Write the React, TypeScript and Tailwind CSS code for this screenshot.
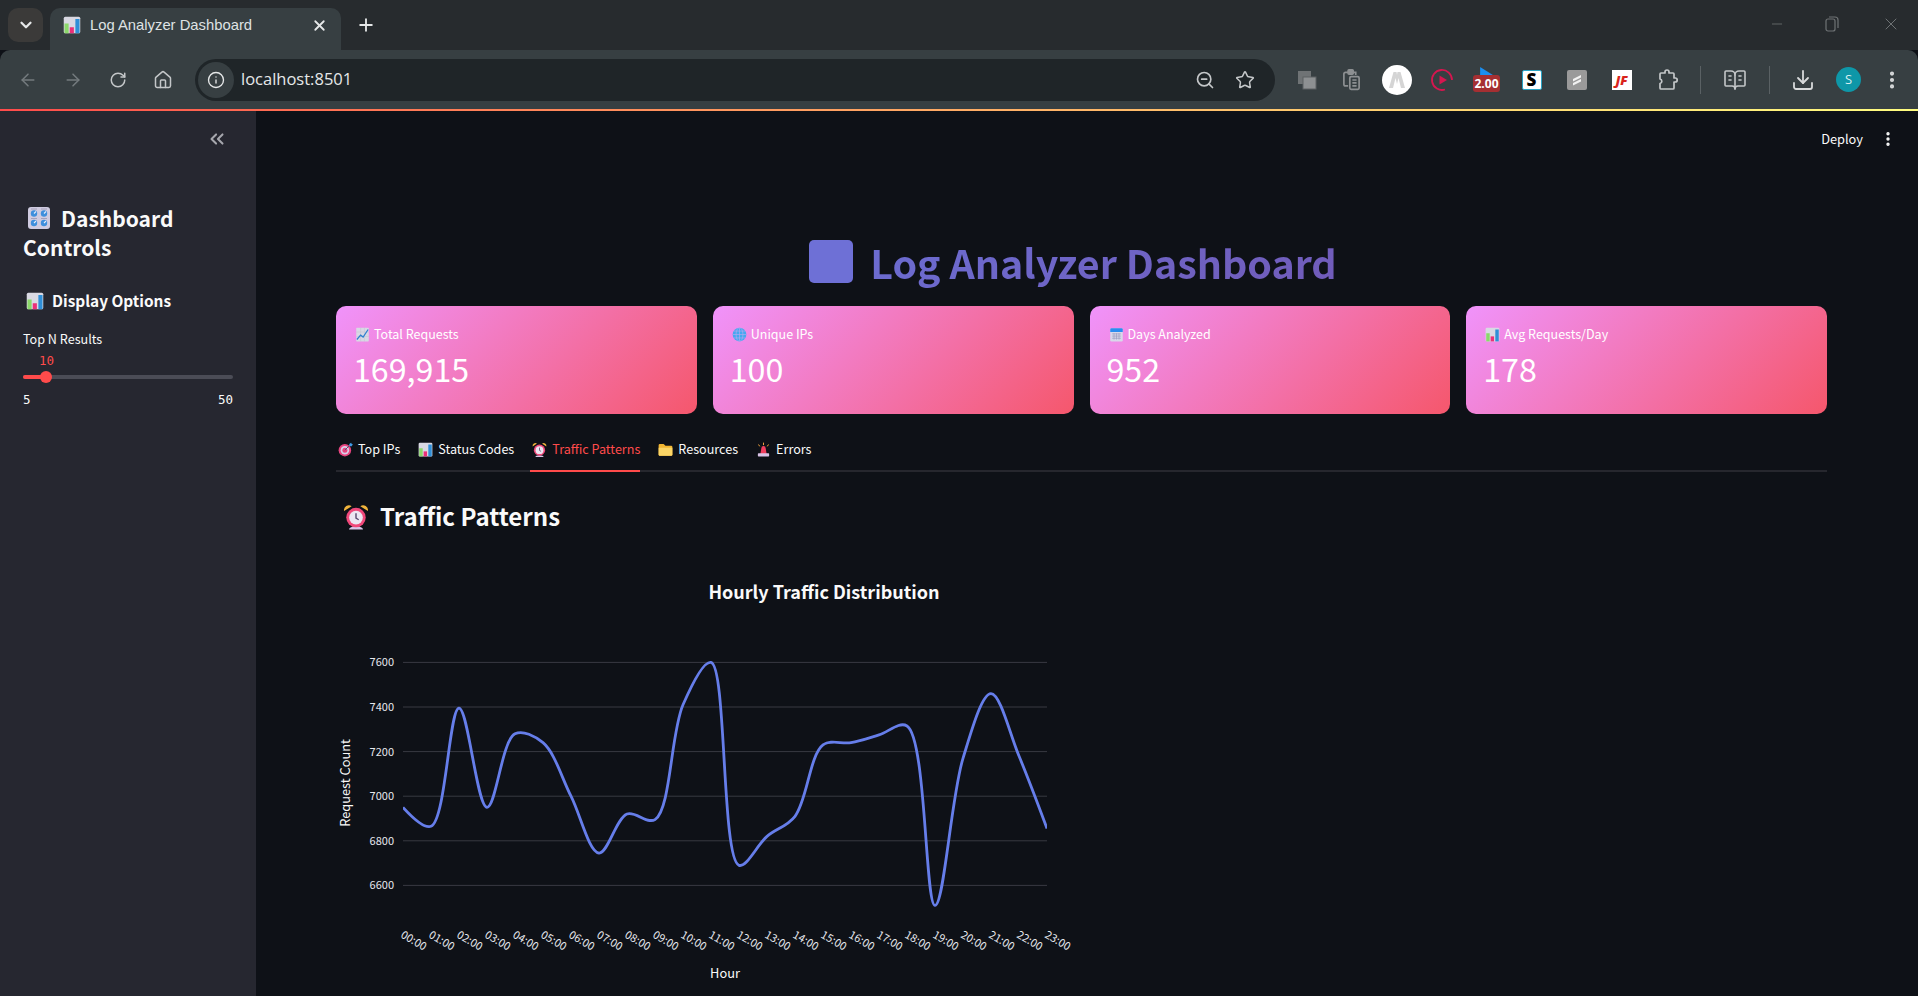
import React from 'react';
import {
    ArrowLeft, ArrowRight, BookOpenText, ChevronDown, ChevronsLeft, Download,
    EllipsisVertical, Home, Info, Minus, Plus, RotateCw, Star, X, ZoomOut,
} from 'lucide-react';

// emojis are drawn by hand, there is no colour emoji font in the sandbox
function ChartEmoji({className}: {className: string}) {
    return (
        <svg viewBox="0 0 24 24" className={className}>
            <rect x="1" y="1" width="22" height="22" rx="2" fill="#d9d9e3" />
            <rect x="2" y="10" width="5.5" height="13" fill="#8bd86a" />
            <rect x="9" y="15" width="5.5" height="8" fill="#ec2f78" />
            <rect x="16.5" y="4" width="5.5" height="19" fill="#2f8fd8" />
        </svg>
    );
}

function KnobsEmoji({className}: {className: string}) {
    return (
        <svg viewBox="0 0 24 24" className={className}>
            <rect x="1" y="1" width="22" height="22" rx="3" fill="#cfcbe0" />
            {[7, 17].map((cx) =>
                [7.5, 17].map((cy) => (
                    <g key={`${cx}-${cy}`}>
                        <circle cx={cx} cy={cy} r="3.2" fill="#3f8fdc" />
                        <path d={`M${cx} ${cy}l2 -2`} stroke="#e8eefc" strokeWidth="1.1" />
                        <path d={`M${cx - 3} ${cy - 4.5}h6`} stroke="#9a96b0" strokeWidth="0.8" />
                    </g>
                )),
            )}
        </svg>
    );
}

function TargetEmoji({className}: {className: string}) {
    return (
        <svg viewBox="0 0 24 24" className={className}>
            <circle cx="11" cy="13" r="10" fill="#e8447f" />
            <circle cx="11" cy="13" r="6.8" fill="#d9cfe8" />
            <circle cx="11" cy="13" r="4" fill="#e8447f" />
            <path d="M11 13 20 4" stroke="#4a5a78" strokeWidth="1.6" />
            <path d="M18 3l3-2 1 2 2 1-3 3-3-1z" fill="#3f9be8" />
        </svg>
    );
}

function ClockEmoji({className}: {className: string}) {
    return (
        <svg viewBox="0 0 24 24" className={className}>
            <path d="M1 7a4.5 4.5 0 0 1 7-4.5zM23 7a4.5 4.5 0 0 0-7-4.5z" fill="#f0b43c" />
            <path d="M5.5 24a6.500 3 0 0 1 13 0z" fill="#d9c4e8" />
            <circle cx="12" cy="13" r="9" fill="#f0487a" />
            <circle cx="12" cy="13" r="6.300" fill="#ece6f2" />
            <path d="M12 9v4.500l2.500 1.500" stroke="#5a4a70" strokeWidth="1.300" fill="none" />
        </svg>
    );
}

function FolderEmoji({className}: {className: string}) {
    return (
        <svg viewBox="0 0 24 24" className={className}>
            <path d="M1 5a2 2 0 0 1 2-2h6l3 3h9a2 2 0 0 1 2 2v12a2 2 0 0 1-2 2H3a2 2 0 0 1-2-2z" fill="#f2b632" />
            <path d="M1 9h22v11a2 2 0 0 1-2 2H3a2 2 0 0 1-2-2z" fill="#fbd566" />
        </svg>
    );
}

function SirenEmoji({className}: {className: string}) {
    return (
        <svg viewBox="0 0 24 24" className={className}>
            <path d="M12 1v4M4 4l2 3M20 4l-2 3" stroke="#f2a33c" strokeWidth="1.600" />
            <path d="M7 19l1.500-9a3.500 3.500 0 0 1 7 0L17 19z" fill="#f03e5e" />
            <rect x="3" y="18" width="18" height="5" rx="1" fill="#d9c4e8" />
        </svg>
    );
}

function TrendEmoji({className}: {className: string}) {
    return (
        <svg viewBox="0 0 24 24" className={className}>
            <rect x="2" y="1" width="20" height="22" rx="1" fill="#d8d8e4" />
            <path d="M2 8h20M2 15h20M9 1v22M15 1v22" stroke="#c0c0d0" strokeWidth="0.800" />
            <path d="M3 20l6-7 4 3 8-12" stroke="#2f80d0" strokeWidth="2" fill="none" />
        </svg>
    );
}

function GlobeEmoji({className}: {className: string}) {
    return (
        <svg viewBox="0 0 24 24" className={className}>
            <circle cx="12" cy="12" r="11" fill="#45a8f0" />
            <path d="M1 12h22M3 6.500h18M3 17.500h18M12 1v22" stroke="#b9a8f0" strokeWidth="1" />
            <ellipse cx="12" cy="12" rx="5.500" ry="11" stroke="#b9a8f0" strokeWidth="1" fill="none" />
        </svg>
    );
}

function CalendarEmoji({className}: {className: string}) {
    return (
        <svg viewBox="0 0 24 24" className={className}>
            <rect x="2" y="2" width="20" height="21" rx="2" fill="#d8d8ea" />
            <path d="M2 8V4a2 2 0 0 1 2-2h16a2 2 0 0 1 2 2v4z" fill="#2b8cf0" />
            <path d="M5 11h14M5 14.500h14M5 18h14M8 10v10M12 10v10M16 10v10" stroke="#9a9ac0" strokeWidth="1.100" />
        </svg>
    );
}

const cards = [
    {icon: TrendEmoji, label: 'Total Requests', value: '169,915'},
    {icon: GlobeEmoji, label: 'Unique IPs', value: '100'},
    {icon: CalendarEmoji, label: 'Days Analyzed', value: '952'},
    {icon: ChartEmoji, label: 'Avg Requests/Day', value: '178'},
];

const tabs = [
    {icon: TargetEmoji, label: 'Top IPs'},
    {icon: ChartEmoji, label: 'Status Codes'},
    {icon: ClockEmoji, label: 'Traffic Patterns', active: true},
    {icon: FolderEmoji, label: 'Resources'},
    {icon: SirenEmoji, label: 'Errors'},
];

const hourly = [
    6950, 6865, 7395, 6950, 7280, 7240, 7000, 6745, 6920, 6895, 7410, 7600,
    6690, 6820, 6910, 7230, 7240, 7275, 7315, 6510, 7170, 7460, 7180, 6855,
];
const yTicks = [7600, 7400, 7200, 7000, 6800, 6600];

const xAt = (i: number) => 403 + i * 28;
const yAt = (v: number) => 662.4 + (7600 - v) * 0.223;

// same spline as plotly's line.shape = 'spline'
function tangent(a: number[], b: number[], c: number[]) {
    const d1x = a[0] - b[0], d1y = a[1] - b[1], d2x = c[0] - b[0], d2y = c[1] - b[1];
    const d1 = Math.pow(d1x * d1x + d1y * d1y, 0.25);
    const d2 = Math.pow(d2x * d2x + d2y * d2y, 0.25);
    const nx = d2 * d2 * d1x - d1 * d1 * d2x;
    const ny = d2 * d2 * d1y - d1 * d1 * d2y;
    const den1 = 3 * d2 * (d1 + d2), den2 = 3 * d1 * (d1 + d2);
    return [[b[0] + nx / den1, b[1] + ny / den1], [b[0] - nx / den2, b[1] - ny / den2]];
}

function splinePath(values: number[]) {
    const pts = values.map((v, i) => [xAt(i), yAt(v)]);
    const t: number[][][] = [];
    for (let i = 1; i < pts.length - 1; i++) t.push(tangent(pts[i - 1], pts[i], pts[i + 1]));
    let d = `M${pts[0]}Q${t[0][0]} ${pts[1]}`;
    for (let i = 2; i < pts.length - 1; i++) d += `C${t[i - 2][1]} ${t[i - 1][0]} ${pts[i]}`;
    d += `Q${t[pts.length - 3][1]} ${pts[pts.length - 1]}`;
    return d;
}

function TrafficChart() {
    return (
        <svg viewBox="336 560 1000 436" className="w-[1000px] h-[436px] shrink-0">
            <text x="824" y="599" textAnchor="middle" fill="#fafafa" fontSize="18" fontWeight="700">
                Hourly Traffic Distribution
            </text>
            {yTicks.map((v) => (
                <g key={v}>
                    <line x1="403" x2="1047" y1={yAt(v)} y2={yAt(v)} stroke="#383a42" />
                    <text x="394" y={yAt(v) + 4} textAnchor="end" fill="#e6e8ee" fontSize="11">{v}</text>
                </g>
            ))}
            <clipPath id="plot"><rect x="403" y="650" width="644" height="260" /></clipPath>
            <path d={splinePath(hourly)} clipPath="url(#plot)" fill="none" stroke="#667eea" strokeWidth="2.8" />
            {hourly.map((_, i) => (
                <text
                    key={i}
                    transform={`translate(${xAt(i) - 3} 937) rotate(30)`}
                    fill="#e6e8ee"
                    fontSize="11"
                >
                    {`${String(i).padStart(2, '0')}:00`}
                </text>
            ))}
            <text x="725" y="978" textAnchor="middle" fill="#fafafa" fontSize="12.800">Hour</text>
            <text transform="translate(350 783) rotate(-90)" textAnchor="middle" fill="#fafafa" fontSize="12.800">
                Request Count
            </text>
        </svg>
    );
}

function ExtensionIcons() {
    return (
        <div className="flex items-center">
            <div className="w-[45px] flex justify-center">
                <svg viewBox="0 0 20 20" className="w-[20px] h-[20px]">
                    <rect x="1" y="1" width="13" height="13" fill="#6f7375" />
                    <rect x="6" y="7" width="13" height="12" fill="#8d9092" stroke="#5c6062" />
                </svg>
            </div>
            <div className="w-[45px] flex justify-center">
                <svg viewBox="0 0 22 26" className="w-[19px] h-[22px]" fill="none" stroke="#8d9092" strokeWidth="2">
                    <path d="M7 20H4a2 2 0 0 1-2-2V6a2 2 0 0 1 2-2h12v3" />
                    <rect x="7" y="1" width="6" height="5" rx="1" fill="#8d9092" />
                    <rect x="9" y="9" width="11" height="15" rx="1.500" />
                    <path d="M12 13h5M12 16.500h5M12 20h5" />
                </svg>
            </div>
            <div className="w-[45px] flex justify-center">
                <div className="w-[30px] h-[30px] rounded-full bg-white flex items-center justify-center">
                    <svg viewBox="0 0 20 20" className="w-[20px] h-[20px]">
                        <path d="M2 18 6.500 2h3L10 5l.5-3h3L18 18h-4L11.500 8 10 14 8.500 8 6 18z" fill="#d5d5d5" />
                    </svg>
                </div>
            </div>
            <div className="w-[45px] flex justify-center">
                <svg viewBox="0 0 24 24" className="w-[24px] h-[24px]">
                    <path d="M15 21.500A10 10 0 1 1 22 12" fill="none" stroke="#d5164f" strokeWidth="1.800" />
                    <path d="M9.500 7.500 17 12l-7.500 4.500z" fill="#d5164f" />
                </svg>
            </div>
            <div className="w-[45px] flex flex-col items-center">
                <svg viewBox="0 0 16 10" className="w-[15px] h-[8px] mr-[1px]">
                    <path d="M0 0 16 10H0z" fill="#1b8ff0" />
                </svg>
                <div className="w-[27px] h-[17px] rounded-[3px] bg-[#a52f32] text-white text-[12px] leading-[17px] font-bold text-center">2.00</div>
            </div>
            <div className="w-[45px] flex justify-center">
                <div className="w-[20px] h-[20px] bg-white border border-[#29a3c4] rounded-[2px] text-black text-[17px] leading-[18px] font-black text-center">S</div>
            </div>
            <div className="w-[45px] flex justify-center">
                <svg viewBox="0 0 20 20" className="w-[20px] h-[20px]">
                    <rect width="20" height="20" rx="2" fill="#9a9a9a" />
                    <path d="M6 9l8-4v2.500l-8 4zM6 13l8-4v2.500l-8 4z" fill="#f2f2f2" />
                </svg>
            </div>
            <div className="w-[45px] flex justify-center">
                <div className="w-[20px] h-[20px] bg-white text-[#d9241c] text-[13px] leading-[20px] font-black italic text-center">JF</div>
            </div>
            <div className="w-[45px] flex justify-center">
                <svg viewBox="0 0 24 24" className="w-[24px] h-[24px]" fill="none" stroke="#c4c7c9" strokeWidth="1.700" strokeLinejoin="round">
                    <path d="M6 5h4V4a2 2 0 0 1 4 0v1h4a1 1 0 0 1 1 1v4h1.200a2 2 0 0 1 0 4H19v6a1 1 0 0 1-1 1H6a1 1 0 0 1-1-1v-4.500a2.300 2.300 0 0 0 0-4.500V6a1 1 0 0 1 1-1z" />
                </svg>
            </div>
        </div>
    );
}

function BrowserChrome() {
    return (
        <header className="shrink-0 font-['Open_Sans',sans-serif]">
            <div className="h-[50px] bg-[#272b2e] flex items-end">
                <div className="w-[35px] h-[34px] ml-[8px] mb-[8px] mr-[7px] rounded-[10px] bg-[#3b3a39] flex items-center justify-center">
                    <ChevronDown size={18} color="#e6e8e9" strokeWidth={3} />
                </div>
                <div className="w-[291px] h-[42px] rounded-t-[10px] bg-[#373f42] flex items-center pl-[13px] pr-[13px] pb-[8px]">
                    <ChartEmoji className="w-[18px] h-[20px] shrink-0" />
                    <span className="ml-[9px] text-[14.800px] font-['Liberation_Sans',sans-serif] text-[#dfe2e4] flex-1 whitespace-nowrap">Log Analyzer Dashboard</span>
                    <X size={17} color="#e6e8e9" strokeWidth={2.5} />
                </div>
                <div className="ml-[15px] mb-[15px]">
                    <Plus size={20} color="#e6e8e9" strokeWidth={2.2} />
                </div>
                <div className="ml-auto flex items-center h-[48px] mb-[2px] text-[#6f7375]">
                    <div className="w-[46px] flex justify-center"><Minus size={16} strokeWidth={1.2} /></div>
                    <div className="w-[64px] flex justify-center">
                        <svg viewBox="0 0 14 16" className="w-[14px] h-[16px]" fill="none" stroke="#6f7375" strokeWidth="1.200">
                            <rect x="1" y="3" width="9" height="12" rx="2" />
                            <path d="M4 1h6a3 3 0 0 1 3 3v8" />
                        </svg>
                    </div>
                    <div className="w-[54px] flex justify-center"><X size={20} strokeWidth={1.2} /></div>
                </div>
            </div>
            <div className="h-[59px] bg-[#373f42] rounded-t-[10px] flex items-center">
                <div className="flex items-center w-[195px] pl-[5px] text-[#747b7e]">
                    <div className="w-[45px] flex justify-center"><ArrowLeft size={20} strokeWidth={1.8} /></div>
                    <div className="w-[45px] flex justify-center"><ArrowRight size={20} strokeWidth={1.8} /></div>
                    <div className="w-[45px] flex justify-center text-[#c4c7c9]"><RotateCw size={18} strokeWidth={2} /></div>
                    <div className="w-[45px] flex justify-center text-[#c4c7c9]"><Home size={20} strokeWidth={1.8} /></div>
                </div>
                <div className="w-[1080px] h-[42px] rounded-full bg-[#1f2528] flex items-center pl-[3px] pr-[20px]">
                    <div className="w-[36px] h-[36px] rounded-full bg-[#373f42] flex items-center justify-center">
                        <Info size={18} color="#e6e8e9" strokeWidth={1.8} />
                    </div>
                    <span className="ml-[7px] text-[16.500px] text-[#e6e8e9]">localhost:8501</span>
                    <div className="ml-auto flex items-center gap-[20px] text-[#c4c7c9]">
                        <ZoomOut size={20} strokeWidth={2} />
                        <Star size={20} strokeWidth={1.8} />
                    </div>
                </div>
                <div className="ml-[9px]"><ExtensionIcons /></div>
                <div className="w-[1px] h-[28px] bg-[#5a6164] ml-[11px]" />
                <div className="w-[68px] flex justify-center text-[#c4c7c9]"><BookOpenText size={24} strokeWidth={1.6} /></div>
                <div className="w-[1px] h-[28px] bg-[#5a6164]" />
                <div className="w-[66px] flex justify-center text-[#d8dadb]"><Download size={24} strokeWidth={1.8} /></div>
                <div className="w-[25px] h-[25px] rounded-full bg-[#0e97a8] text-[#d8eef0] text-[13px] leading-[25px] text-center">S</div>
                <div className="ml-[20px] text-[#d8dadb]"><EllipsisVertical size={22} strokeWidth={2.5} /></div>
            </div>
            <div className="h-[2px] bg-gradient-to-r from-[#ff4b4b] to-[#fffd80]" />
        </header>
    );
}

function Sidebar() {
    return (
        <aside className="w-[256px] shrink-0 bg-[#262730] pl-[23px] pr-[23px] text-[#fafafa]">
            <div className="h-[56px] flex items-center justify-end pr-[6px] -mr-[1px]">
                <ChevronsLeft size={22} color="#a6a7ad" strokeWidth={2.2} />
            </div>
            <h2 className="mt-[37px] text-[21px] leading-[29px] font-semibold">
                <KnobsEmoji className="inline-block w-[24px] h-[24px] ml-[4px] mr-[10px] -mt-[6px]" />
                Dashboard
                <br />
                Controls
            </h2>
            <h3 className="mt-[25px] h-[27px] text-[15.400px] font-semibold flex items-center leading-[27px]">
                <ChartEmoji className="w-[18px] h-[18px] ml-[3px] mr-[8px]" />
                Display Options
            </h3>
            <p className="mt-[14px] text-[12.600px] leading-[22px]">Top N Results</p>
            <div className="h-[22px] pl-[16px] font-['DejaVu_Sans_Mono',monospace] text-[12.500px] leading-[22px] text-[#ff4b4b]">10</div>
            <div className="relative h-[4px] mt-[3px] rounded-full bg-[#4b4c56]">
                <div className="h-full w-[23px] rounded-full bg-[#ff4b4b]" />
                <div className="absolute left-[17px] -top-[4px] w-[12px] h-[12px] rounded-full bg-[#ff4b4b]" />
            </div>
            <div className="mt-[11px] flex justify-between font-['DejaVu_Sans_Mono',monospace] text-[12.500px] leading-[20px]">
                <span>5</span>
                <span>50</span>
            </div>
        </aside>
    );
}

export default function App() {
    return (
        <div className="w-[1918px] h-[996px] overflow-hidden flex flex-col bg-[#0e1117] font-['Noto_Sans_CJK_SC','Noto_Sans',sans-serif]">
            <BrowserChrome />
            <div className="flex flex-1 min-h-0">
                <Sidebar />
                <main className="flex-1 min-w-0 pl-[80px] pr-[91px] text-[#fafafa]">
                    <div className="h-[55px] -mr-[91px] flex items-center justify-end pr-[21px]">
                        <span className="text-[12.800px]">Deploy</span>
                        <EllipsisVertical size={18} strokeWidth={2.5} className="ml-[16px]" />
                    </div>
                    <div className="mt-[62px] h-[78px] pb-[11px] pr-[17px] flex items-center justify-center gap-[17px] bg-[linear-gradient(135deg,#667eea,#764ba2)] bg-clip-text text-transparent">
                        <div className="w-[44px] h-[43px] rounded-[5px] bg-[#6e70d6]" />
                        <h1 className="text-[39.400px] leading-[60px] font-bold whitespace-nowrap">Log Analyzer Dashboard</h1>
                    </div>
                    <div className="grid grid-cols-4 gap-[16px]">
                        {cards.map((card) => (
                            <div key={card.label} className="h-[108px] rounded-[10px] bg-[linear-gradient(135deg,#f093fb,#f5576c)] pl-[17px] pt-[15px] text-white">
                                <div className="flex items-center h-[26px] pl-[2px] text-[12.500px] leading-[26px]">
                                    <card.icon className="w-[15px] h-[15px] mr-[4px]" />
                                    {card.label}
                                </div>
                                <div className="-mt-[1px] text-[32.200px] leading-[44px]">{card.value}</div>
                            </div>
                        ))}
                    </div>
                    <div className="mt-[16px] h-[42px] flex gap-[16px] border-b-2 border-[#26272e]">
                        {tabs.map((tab) => (
                            <div
                                key={tab.label}
                                className={tab.active
                                    ? 'h-[42px] pb-[1px] flex items-center border-b-2 border-[#ff4b4b] text-[#ff4b4b] text-[12.600px]'
                                    : 'h-[40px] pb-[1px] flex items-center text-[12.600px]'}
                            >
                                <tab.icon className="w-[15px] h-[15px] ml-[2px] mr-[5px]" />
                                {tab.label}
                            </div>
                        ))}
                    </div>
                    <div className="mt-[24px] h-[40px] flex items-center">
                        <ClockEmoji className="w-[26px] h-[27px] ml-[7px] mr-[11px]" />
                        <h2 className="text-[24px] leading-[40px] font-semibold">Traffic Patterns</h2>
                    </div>
                    <div className="mt-[24px]">
                        <TrafficChart />
                    </div>
                </main>
            </div>
        </div>
    );
}
